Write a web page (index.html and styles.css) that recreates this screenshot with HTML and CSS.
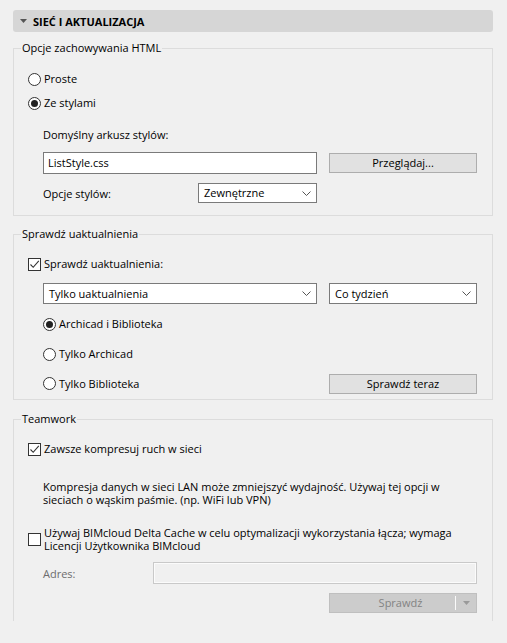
FILE: index.html
```html
<!DOCTYPE html>
<html lang="pl">
<head>
<meta charset="utf-8">
<title>Sieć i aktualizacja</title>
<link rel="stylesheet" href="styles.css">
</head>
<body>
<div class="panel">
  <div class="header">
    <svg class="tri" width="7" height="4" viewBox="0 0 7 4"><path d="M0 0H7L3.5 4Z" fill="#555"/></svg>
    <span>SIEĆ I AKTUALIZACJA</span>
  </div>

  <fieldset class="group g1">
    <legend>Opcje zachowywania HTML</legend>
    <div class="body b1">
      <div class="row opt"><span class="radio"></span><span>Proste</span></div>
      <div class="row opt mt8"><span class="radio on"></span><span>Ze stylami</span></div>
      <div class="row line ind mt16">Domyślny arkusz stylów:</div>
      <div class="row ind mt9 file-row">
        <div class="input w-file">ListStyle.css</div>
        <div class="button w-btn">Przeglądaj...</div>
      </div>
      <div class="row ind mt9 h20">
        <span class="lbl-styles">Opcje stylów:</span>
        <div class="select w-style">Zewnętrzne
          <svg class="chev" width="9" height="5" viewBox="0 0 9 5"><path d="M0.5 0.5L4.5 4.5L8.5 0.5" fill="none" stroke="#555" stroke-width="1"/></svg>
        </div>
      </div>
    </div>
  </fieldset>

  <fieldset class="group g2">
    <legend>Sprawdź uaktualnienia</legend>
    <div class="body b2">
      <div class="row opt"><span class="check on"><svg width="11" height="11" viewBox="0 0 11 11"><path d="M1.5 5.5L4.2 8.3L9.8 1.8" fill="none" stroke="#333" stroke-width="1.1"/></svg></span><span>Sprawdź uaktualnienia:</span></div>
      <div class="row ind mt11 h21 sel-row">
        <div class="select w-upd h21">Tylko uaktualnienia
          <svg class="chev" width="9" height="5" viewBox="0 0 9 5"><path d="M0.5 0.5L4.5 4.5L8.5 0.5" fill="none" stroke="#555" stroke-width="1"/></svg>
        </div>
        <div class="select w-btn h21">Co tydzień
          <svg class="chev" width="9" height="5" viewBox="0 0 9 5"><path d="M0.5 0.5L4.5 4.5L8.5 0.5" fill="none" stroke="#555" stroke-width="1"/></svg>
        </div>
      </div>
      <div class="row opt sub mt12"><span class="radio on"></span><span>Archicad i Biblioteka</span></div>
      <div class="row opt sub mt14"><span class="radio"></span><span>Tylko Archicad</span></div>
      <div class="row sub mt11 h21 last-row">
        <div class="row opt"><span class="radio"></span><span>Tylko Biblioteka</span></div>
        <div class="button w-btn h21">Sprawdź teraz</div>
      </div>
    </div>
  </fieldset>

  <fieldset class="group g3">
    <legend>Teamwork</legend>
    <div class="body b3">
      <div class="row opt"><span class="check on"><svg width="11" height="11" viewBox="0 0 11 11"><path d="M1.5 5.5L4.2 8.3L9.8 1.8" fill="none" stroke="#333" stroke-width="1.1"/></svg></span><span>Zawsze kompresuj ruch w sieci</span></div>
      <p class="note">Kompresja danych w sieci LAN może zmniejszyć wydajność. Używaj tej opcji w sieciach o wąskim paśmie. (np. WiFi lub VPN)</p>
      <div class="row multi mt20"><span class="check"></span><span class="multi-text">Używaj BIMcloud Delta Cache w celu optymalizacji wykorzystania łącza; wymaga Licencji Użytkownika BIMcloud</span></div>
      <div class="row ind mt10 h22">
        <span class="lbl-addr">Adres:</span>
        <div class="input disabled w-addr"></div>
      </div>
      <div class="row mt9 h20 end">
        <div class="split disabled w-btn">
          <span class="split-main">Sprawdź</span>
          <span class="split-arrow"><svg width="7" height="4" viewBox="0 0 7 4"><path d="M0 0H7L3.5 4Z" fill="#9a9a9a"/></svg></span>
        </div>
      </div>
    </div>
  </fieldset>
</div>
</body>
</html>
```

FILE: styles.css
```css
* { box-sizing: border-box; }
html, body { margin: 0; padding: 0; }
body {
  background: #f0f0f0;
  font-family: "Open Sans", "Noto Sans", sans-serif;
  font-size: 11px;
  color: #000;
  width: 507px;
  height: 643px;
  overflow: hidden;
}
.panel { padding: 10px 14px 0 13px; }

.header {
  height: 22px;
  background: #d6d6d6;
  border-radius: 3px;
  display: flex;
  align-items: center;
  padding-left: 7px;
  gap: 6px;
  font-weight: bold;
  font-size: 11px;
}
.tri { display: block; }

.group {
  margin: 0;
  padding: 0;
  border: 1px solid #dcdcdc;
  min-width: 0;
}
.group legend {
  margin-left: 7px;
  padding: 0 1px;
  line-height: 16px;
  height: 16px;
}
.g1 { margin-top: 8px; }
.g2 { margin-top: 10px; }
.g3 { margin-top: 11px; border-bottom: none; }

.body { padding: 0 15px 0 14px; }
.b1 { padding-top: 15px; padding-bottom: 12px; }
.b2 { padding-top: 14px; padding-bottom: 5px; }
.b3 { padding-top: 14px; padding-bottom: 8px; }

.row { display: flex; align-items: center; }
.opt { height: 16px; gap: 3px; line-height: 16px; }
.line { height: 16px; line-height: 16px; }
.ind { padding-left: 15px; }
.sub { padding-left: 15px; }
.mt8 { margin-top: 8px; }
.mt9 { margin-top: 9px; }
.mt10 { margin-top: 10px; }
.mt11 { margin-top: 11px; }
.mt12 { margin-top: 12px; }
.mt14 { margin-top: 14px; }
.mt16 { margin-top: 16px; }
.mt20 { margin-top: 20px; }
.h20 { height: 20px; }
.h21 { height: 21px; }
.h22 { height: 22px; }

.radio {
  width: 13px; height: 13px;
  border: 1px solid #333;
  border-radius: 50%;
  background: #fff;
  display: flex; align-items: center; justify-content: center;
  flex: none;
}
.radio.on::after {
  content: "";
  width: 7px; height: 7px;
  border-radius: 50%;
  background: #222;
}
.check {
  width: 13px; height: 13px;
  border: 1px solid #333;
  background: #fff;
  display: flex; align-items: center; justify-content: center;
  flex: none;
}
.check svg { display: block; }

.file-row { height: 22px; justify-content: space-between; }
.input {
  height: 22px;
  border: 1px solid #7a7a7a;
  background: #fff;
  padding-left: 4px;
  line-height: 20px;
}
.w-file { width: 274px; }
.button {
  height: 20px;
  border: 1px solid #adadad;
  background: #e1e1e1;
  text-align: center;
  line-height: 18px;
}
.w-btn { width: 148px; }

.lbl-styles { width: 155px; }
.select {
  position: relative;
  height: 20px;
  border: 1px solid #7a7a7a;
  background: #fff;
  padding-left: 5px;
  line-height: 18px;
  display: flex; align-items: center; justify-content: space-between;
  padding-right: 5px;
}
.select.h21 { height: 21px; }
.chev { display: block; }
.w-style { width: 119px; }
.sel-row { justify-content: space-between; }
.w-upd { width: 274px; }

.last-row { justify-content: space-between; }

.note {
  margin: 23px 0 0;
  padding-left: 15px;
  line-height: 13px;
}
.multi { gap: 3px; }
.multi-text { line-height: 13px; }

.lbl-addr { width: 110px; color: #6d6d6d; }
.input.disabled {
  border-color: #c9c9c9;
  background: #f0f0f0;
  box-shadow: inset 0 0 0 1px #fbfbfb;
}
.w-addr { width: 324px; }
.end { justify-content: flex-end; }
.split {
  height: 20px;
  border: 1px solid #bfbfbf;
  background: #cccccc;
  display: flex;
  align-items: stretch;
  color: #838383;
}
.split-main { flex: 1; text-align: center; line-height: 18px; padding-left: 16px; }
.split-arrow {
  width: 21px;
  display: flex; align-items: center; justify-content: center;
  border-left: 1px solid #fafafa;
  margin: 2px 0;
}
```
